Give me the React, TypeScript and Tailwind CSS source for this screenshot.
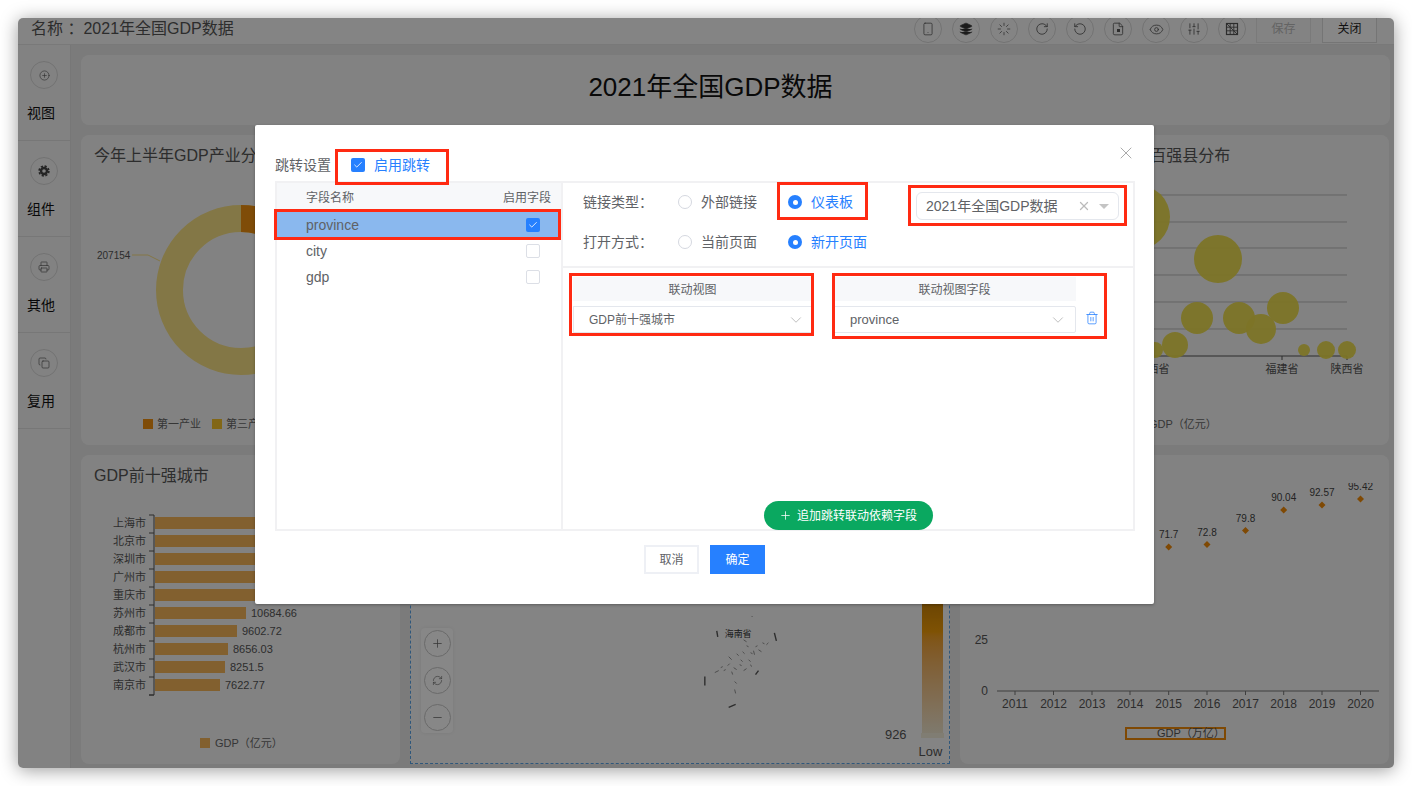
import React from "react";
import {
  Smartphone, Layers, Loader, RotateCw, RotateCcw, File, Eye, SlidersVertical,
  CirclePlus, Printer, Copy, Check, X, ChevronDown, Trash2, Plus, Minus, RefreshCw,
} from "lucide-react";

function FileDot() {
  return (
    <span className="relative flex h-[14px] w-[14px] items-center justify-center">
      <File size={14} strokeWidth={1.4} />
      <span className="absolute left-[6px] top-[7px] h-[3px] w-[3px] bg-[#555]" />
    </span>
  );
}

function HatchGrid() {
  return (
    <svg width="14" height="14" viewBox="0 0 14 14" fill="none" stroke="#555" strokeWidth="0.9">
      <rect x="1.5" y="1.5" width="11" height="11" strokeWidth="1.2" />
      <path d="M1.5 5.2H12.5M1.5 8.8H12.5M5.2 1.5V12.5M8.8 1.5V12.5M1.5 1.5L12.5 12.5" />
    </svg>
  );
}

function SolidGear({ size }: { size?: number }) {
  return (
    <svg width={size ?? 12} height={size ?? 12} viewBox="0 0 12 12" fill="none" stroke="#444">
      <circle cx="6" cy="6" r="3" strokeWidth="2.4" />
      <circle cx="6" cy="6" r="4.9" strokeWidth="1.6" strokeDasharray="2.2 1.65" />
    </svg>
  );
}

const sideItems = [
  { label: "视图", Icon: CirclePlus },
  { label: "组件", Icon: SolidGear },
  { label: "其他", Icon: Printer },
  { label: "复用", Icon: Copy },
];

function Card({ className, title, titleClass, children }: { className?: string; title?: string; titleClass?: string; children?: React.ReactNode }) {
  return (
    <div className={"relative overflow-hidden rounded-[8px] bg-[#f6f6f6] " + (className ?? "")}>
      {title && <div className={(titleClass ?? "pl-[13px]") + " pt-[10px] text-[16px] leading-[22px] text-[#555]"}>{title}</div>}
      {children}
    </div>
  );
}

function DonutChart() {
  return (
    <svg className="block h-[278px] w-[319px]" viewBox="81 167 319 278">
      <circle cx="241" cy="290" r="71.5" fill="none" stroke="#f8e084" strokeWidth="27" />
      <path d="M241 205 A85 85 0 0 1 300 229 L281 249 A58 58 0 0 0 241 232 Z" fill="#f09010" />
      <text x="97" y="259" fontSize="10" fill="#555">207154</text>
      <path d="M132 255 H148 L160 261" fill="none" stroke="#f8e084" />
      <rect x="143" y="419" width="10" height="10" fill="#f09010" />
      <text x="157" y="428" fontSize="11" fill="#666">第一产业</text>
      <rect x="212" y="419" width="10" height="10" fill="#f5c22c" />
      <text x="226" y="428" fontSize="11" fill="#666">第三产业</text>
    </svg>
  );
}

const cities: [string, number, string][] = [
  ["上海市", 185, "38700"], ["北京市", 172, "36102"], ["深圳市", 150, "27670"], ["广州市", 132, "25019"], ["重庆市", 125, "25002"],
  ["苏州市", 91, "10684.66"], ["成都市", 82, "9602.72"], ["杭州市", 73, "8656.03"], ["武汉市", 70, "8251.5"], ["南京市", 65, "7622.77"],
];

function BarChart() {
  return (
    <svg className="block h-[276px] w-[319px]" viewBox="81 487 319 276">
      <path d="M149 515 H154 V695 H149" fill="none" stroke="#555" />
      {cities.map(([name, w, value], i) => (
        <g key={name}>
          <path d={`M149 ${533 + i * 18} H154`} stroke="#555" />
          <text x="146" y={527 + i * 18} fontSize="11" textAnchor="end" fill="#555">{name}</text>
          <rect x="155" y={517 + i * 18} width={w} height="12" fill="#f5b55a" />
          <text x={155 + w + 5} y={527 + i * 18} fontSize="11" fill="#555">{value}</text>
        </g>
      ))}
      <rect x="200" y="738" width="10" height="10" fill="#f5b55a" />
      <text x="215" y="747" fontSize="11" fill="#666">GDP（亿元）</text>
    </svg>
  );
}

function BubbleChart() {
  const grid = [195, 222, 248, 275, 302, 329];
  const bubbles = [
    [1138, 217, 32], [1218, 259, 24], [1197, 318, 16], [1239, 318, 16], [1261, 329, 15], [1283, 308, 16],
    [1175, 345, 13], [1155, 350, 8], [1304, 350, 6], [1326, 350, 9], [1347, 350, 9],
  ];
  return (
    <svg className="block h-[278px] w-[429px]" viewBox="960 167 429 278">
      {grid.map((y) => <path key={y} d={`M980 ${y} H1347`} stroke="#bbb" />)}
      <path d="M980 356 H1347 M1282 356 V360 M1347 356 V360" stroke="#555" />
      {bubbles.map(([x, y, r]) => <circle key={x} cx={x} cy={y} r={r} fill="#ecdb4a" fillOpacity="0.95" />)}
      <text x="1153" y="373" fontSize="11" textAnchor="middle" fill="#555">江西省</text>
      <text x="1282" y="373" fontSize="11" textAnchor="middle" fill="#555">福建省</text>
      <text x="1347" y="373" fontSize="11" textAnchor="middle" fill="#555">陕西省</text>
      <text x="1149" y="428" fontSize="11" fill="#666">GDP（亿元）</text>
    </svg>
  );
}

function LineChart() {
  const pts: [number, number, string][] = [
    [1168.7, 547, "71.7"], [1207, 544.5, "72.8"], [1245.5, 530.5, "79.8"], [1283.7, 510, "90.04"], [1322, 505, "92.57"], [1360.5, 499, "95.42"],
  ];
  const years = [[1015, 2011], [1053.5, 2012], [1092, 2013], [1130, 2014], [1168.7, 2015], [1207, 2016], [1245.5, 2017], [1283.7, 2018], [1322, 2019], [1360.5, 2020]];
  return (
    <svg className="mt-[28px] block h-[280px] w-[429px]" viewBox="960 483 429 280">
      {pts.map(([x, y, t]) => (
        <g key={t}>
          <path d={`M${x} ${y - 3.5} l3.5 3.5 l-3.5 3.5 l-3.5 -3.5 Z`} fill="#f08a08" />
          <text x={x} y={y - 9} fontSize="10" textAnchor="middle" fill="#444">{t}</text>
        </g>
      ))}
      <text x="988" y="644" fontSize="12" textAnchor="end" fill="#555">25</text>
      <text x="988" y="695" fontSize="12" textAnchor="end" fill="#555">0</text>
      <path d="M997 691 H1379" stroke="#777" />
      {years.map(([x, y]) => (
        <g key={y}>
          <path d={`M${x} 691 V695`} stroke="#777" />
          <text x={x} y="708" fontSize="12" textAnchor="middle" fill="#555">{y}</text>
        </g>
      ))}
      <rect x="1126" y="728" width="99" height="11" fill="none" stroke="#f08a08" strokeWidth="2" />
      <text x="1157" y="737" fontSize="11" fill="#555">GDP（万亿）</text>
    </svg>
  );
}

function MapChart() {
  const dashes = [
    [719, 637, 718, 631], [776, 633, 778, 641], [706, 677, 706, 686], [757, 675, 760, 671], [730, 708, 737, 705],
    [745, 640, 748, 642], [716, 673, 720, 671], [745, 671, 748, 669], [735, 668, 738, 670], [730, 657, 733, 660],
    [750, 660, 752, 662], [760, 650, 763, 652], [744, 652, 746, 654], [736, 690, 737, 694], [729, 666, 731, 664],
    [768, 645, 770, 643], [755, 651, 756, 655], [742, 660, 744, 662], [748, 646, 750, 647], [752, 653, 754, 654],
    [757, 647, 759, 646], [764, 643, 766, 644], [738, 654, 740, 656], [725, 671, 727, 670], [722, 668, 724, 667],
    [733, 672, 734, 675], [741, 665, 743, 666], [752, 665, 753, 667], [736, 682, 738, 684], [753, 616, 754, 617],
  ];
  return (
    <svg className="absolute inset-0 h-full w-full" viewBox="411 455 540 309">
      {dashes.map((d, i) => <line key={i} x1={d[0]} y1={d[1]} x2={d[2]} y2={d[3]} stroke={i < 5 ? "#555" : "#777"} strokeWidth={i < 5 ? 1.4 : 0.8} />)}
      <text x="726" y="637" fontSize="9" fill="#333">海南省</text>
      <text x="909" y="740" fontSize="13" textAnchor="end" fill="#555">926</text>
      <text x="945" y="757" fontSize="13" textAnchor="end" fill="#555">Low</text>
    </svg>
  );
}

function Checkbox({ on }: { on?: boolean }) {
  return on ? (
    <span className="flex h-[14px] w-[14px] items-center justify-center rounded-[2px] bg-[#2680ff]">
      <Check size={10} color="#fff" strokeWidth={2} />
    </span>
  ) : (
    <span className="block h-[14px] w-[14px] rounded-[2px] border border-[#dcdfe6] bg-white" />
  );
}

function Radio({ label, on, w }: { label: string; on?: boolean; w: string }) {
  return (
    <div className={"flex items-center gap-[9px] " + w}>
      {on ? (
        <span className="flex h-[14px] w-[14px] items-center justify-center rounded-full bg-[#2680ff]">
          <span className="h-[5px] w-[5px] rounded-full bg-white" />
        </span>
      ) : (
        <span className="h-[14px] w-[14px] rounded-full border border-[#d5d8e0]" />
      )}
      <span className={on ? "text-[#2680ff]" : "text-[#606266]"}>{label}</span>
    </div>
  );
}

const fields = ["province", "city", "gdp"];

function Modal() {
  return (
    <div className="absolute left-[255px] top-[125px] h-[479px] w-[899px] rounded-[2px] bg-white px-[20px] text-[14px] text-[#606266] shadow-[0_1px_3px_rgba(0,0,0,0.3)]">
      <button className="absolute right-[18px] top-[18px] text-[#999]"><X size={20} strokeWidth={1} /></button>

      <div className="mt-[30px] flex h-[20px] items-center">
        <span className="mr-[20px]">跳转设置</span>
        <Checkbox on />
        <span className="ml-[9px] text-[#2680ff]">启用跳转</span>
      </div>

      <div className="mt-[6px] flex h-[350px] w-[860px] border-2 border-[#f1f1f3]">
        <div className="w-[286px] shrink-0 border-r-2 border-[#f1f1f3]">
          <div className="flex h-[29px] items-center justify-between bg-[#f7f8fa] pl-[29px] pr-[10px] text-[12px]">
            <span>字段名称</span>
            <span>启用字段</span>
          </div>
          {fields.map((f, i) => (
            <div key={f} className={"flex h-[26px] items-center justify-between pl-[29px] pr-[21px] " + (i === 0 ? "bg-[#8ab8ee]" : "")}>
              <span>{f}</span>
              <Checkbox on={i === 0} />
            </div>
          ))}
        </div>

        <div className="flex min-w-0 flex-1 flex-col">
          <div className="h-[85px] border-b-2 border-[#f1f1f3] pl-[20px]">
            <div className="flex h-[38px] items-center">
              <span className="w-[95px]">链接类型：</span>
              <Radio label="外部链接" w="w-[110px]" />
              <Radio label="仪表板" on w="w-[65px]" />
              <div className="ml-[63px] mt-[8px] flex h-[28px] w-[203px] items-center rounded-[6px] border border-[#e4e7ed] pl-[9px] pr-[9px]">
                <span className="flex-1">2021年全国GDP数据</span>
                <X size={14} color="#bbb" strokeWidth={2.2} />
                <span className="ml-[8px] h-0 w-0 border-x-[5px] border-t-[5px] border-x-transparent border-t-[#c4c4c4]" />
              </div>
            </div>
            <div className="mt-px flex h-[40px] items-center">
              <span className="w-[95px]">打开方式：</span>
              <Radio label="当前页面" w="w-[110px]" />
              <Radio label="新开页面" on w="w-[90px]" />
            </div>
          </div>

          <div className="flex gap-[21px] pl-[10px] pt-[9px] text-[12px]">
            <div className="w-[239px]">
              <div className="flex h-[24px] items-center justify-center bg-[#f7f8fa] pt-px">联动视图</div>
              <div className="mt-[5px] flex h-[27px] items-center justify-between border border-[#e4e7ed] pl-[15px] pr-[6px]">
                <span>GDP前十强城市</span>
                <ChevronDown size={18} color="#aaa" strokeWidth={1} />
              </div>
            </div>
            <div className="w-[243px]">
              <div className="flex h-[24px] items-center justify-center bg-[#f7f8fa] pt-px">联动视图字段</div>
              <div className="mt-[5px] flex items-center">
                <div className="flex h-[27px] w-[243px] shrink-0 items-center justify-between rounded-[2px] border border-[#e4e7ed] pl-[16px] pr-[8px] text-[13px]">
                  <span>province</span>
                  <ChevronDown size={18} color="#aaa" strokeWidth={1} />
                </div>
                <Trash2 className="mb-[3px] ml-[9px] shrink-0" size={14} color="#2680ff" strokeWidth={1.3} />
              </div>
            </div>
          </div>

          <button className="-mb-px mt-auto flex h-[29px] w-[169px] items-center justify-center gap-[5px] self-center rounded-full bg-[#0aa860] text-[12px] text-white">
            <Plus size={13} strokeWidth={1.4} />
            <span>追加跳转联动依赖字段</span>
          </button>
        </div>
      </div>

      <div className="mt-[14px] flex justify-center gap-[11px] text-[12px]">
        <button className="h-[29px] w-[55px] border-2 border-[#eef0f5] bg-white text-[#606266]">取消</button>
        <button className="h-[29px] w-[55px] bg-[#2680ff] text-white">确定</button>
      </div>

      <div className="pointer-events-none absolute left-[80px] top-[24px] h-[36px] w-[114px] border-[3px] border-[#ff2a12]" />
      <div className="pointer-events-none absolute left-[19px] top-[84px] h-[31px] w-[287px] border-[3px] border-[#ff2a12]" />
      <div className="pointer-events-none absolute left-[522px] top-[57px] h-[38px] w-[91px] border-[3px] border-[#ff2a12]" />
      <div className="pointer-events-none absolute left-[653px] top-[60px] h-[41px] w-[219px] border-[3px] border-[#ff2a12]" />
      <div className="pointer-events-none absolute left-[314px] top-[148px] h-[63px] w-[245px] border-[3px] border-[#ff2a12]" />
      <div className="pointer-events-none absolute left-[577px] top-[148px] h-[66px] w-[275px] border-[3px] border-[#ff2a12]" />
    </div>
  );
}

const toolbar: React.ReactNode[] = [
  <Smartphone key="a" size={14} strokeWidth={1.3} />,
  <Layers key="b" size={14} strokeWidth={1.3} fill="#333" />,
  <Loader key="c" size={14} strokeWidth={1.3} />,
  <RotateCw key="d" size={14} strokeWidth={1.4} />,
  <RotateCcw key="e" size={14} strokeWidth={1.4} />,
  <FileDot key="f" />,
  <Eye key="g" size={15} strokeWidth={1.3} />,
  <SlidersVertical key="h" size={14} strokeWidth={1.4} />,
  <HatchGrid key="i" />,
];

export default function App() {
  return (
    <div className="relative h-[786px] w-full overflow-hidden bg-white p-[18px] font-['Liberation_Sans','Noto_Sans_CJK_SC',sans-serif]">
      <div className="relative flex h-[750px] w-[1376px] flex-col overflow-hidden rounded-[5px] bg-[#e8e8e8] shadow-[0_2px_18px_rgba(0,0,0,0.4)]">
        <header className="flex h-[27px] shrink-0 items-start overflow-hidden border-b border-[#e4e4e4] bg-[#fafafa] pl-[13px] pr-[17px] pt-px">
          <span className="whitespace-pre text-[16px] leading-[20px] text-[#555]">名称 ：2021年全国GDP数据</span>
          <div className="-mt-[4px] ml-auto flex gap-[10px]">
            {toolbar.map((icon, i) => (
              <span key={i} className="flex h-[28px] w-[28px] items-center justify-center rounded-full border border-[#d8d8d8] text-[#555]">
                {icon}
              </span>
            ))}
          </div>
          <div className="-mt-[4px] ml-[10px] flex h-[28px] w-[55px] items-center justify-center border border-[#e6e6e6] bg-[#f7f7f7] text-[12px] text-[#bbb]">保存</div>
          <div className="-mt-[4px] ml-[11px] flex h-[28px] w-[55px] items-center justify-center border border-[#ddd] bg-white text-[12px] text-[#222]">关闭</div>
        </header>

        <div className="flex min-h-0 flex-1">
          <aside className="w-[53px] shrink-0 border-r border-[#e0e0e0] bg-[#f5f5f5]">
            {sideItems.map(({ label, Icon }) => (
              <div key={label} className="flex h-[96px] flex-col items-center border-b border-[#e0e0e0] pt-[16px]">
                <span className="flex h-[28px] w-[28px] items-center justify-center rounded-full border border-[#d8d8d8] text-[#555]">
                  <Icon size={label === "视图" ? 11 : 12} strokeWidth={1.3} />
                </span>
                <span className="mt-[14px] pr-[6px] text-[14px] leading-[20px] text-[#111]">{label}</span>
              </div>
            ))}
          </aside>

          <main className="flex min-w-0 flex-1 flex-col gap-[10px] pb-[4px] pl-[10px] pr-[4px] pt-[10px]">
            <Card className="flex h-[70px] shrink-0 items-center justify-center pb-[6px] pr-[50px]">
              <h1 className="text-[26px] leading-none text-[#111]">2021年全国GDP数据</h1>
            </Card>
            <div className="grid h-[310px] shrink-0 grid-cols-[319px_540px_429px] gap-x-[10px]">
              <Card title="今年上半年GDP产业分布"><DonutChart /></Card>
              <Card title="全国GDP分布" />
              <Card title="2020年全国各省份GDP百强县分布" titleClass="pl-[24px]"><BubbleChart /></Card>
            </div>
            <div className="grid min-h-0 flex-1 grid-cols-[319px_540px_429px] gap-x-[10px]">
              <Card title="GDP前十强城市"><BarChart /></Card>
              <div className="relative border border-dashed border-[#5aa5e8] bg-[#fafafa]">
                <MapChart />
                <div className="absolute bottom-[30px] left-[10px] flex h-[105px] w-[32px] flex-col items-center justify-between rounded-[4px] bg-white py-[2px] shadow-[0_0_4px_rgba(0,0,0,0.08)]">
                  {[Plus, RefreshCw, Minus].map((Icon, i) => (
                    <span key={i} className="flex h-[27px] w-[27px] items-center justify-center rounded-full border border-[#c8c8c8] text-[#666]">
                      <Icon size={i === 1 ? 11 : 13} strokeWidth={1.4} />
                    </span>
                  ))}
                </div>
                <div className="absolute bottom-[26px] right-[6px] h-[150px] w-[21px] bg-gradient-to-b from-[#b87505] via-[#f09c08] via-[30%] to-[#efe8d4]" />
                <div className="absolute bottom-[25px] right-[5px] h-[5px] w-[23px] bg-[#f2ecd9]" />
              </div>
              <Card><LineChart /></Card>
            </div>
          </main>
        </div>

        <div className="absolute inset-0 bg-black/[0.47]" />
      </div>
      <Modal />
    </div>
  );
}
